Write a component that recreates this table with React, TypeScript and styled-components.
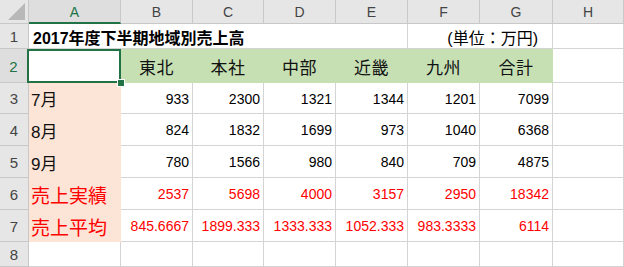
import React from 'react';
import styled, {createGlobalStyle, css} from 'styled-components';

const GRID = '#d4d4d4';
const HEAD_BG = '#e6e6e6';
const HEAD_LINE = '#c8c8c8';
const GREEN = '#217346';
const FILL_GREEN = '#c6e0b4';
const FILL_PEACH = '#fce4d6';
const RED = '#ff0000';

const columns = ['A', 'B', 'C', 'D', 'E', 'F', 'G', 'H'];
const regions = ['東北', '本社', '中部', '近畿', '九州', '合計'];

type Row = {label: string; values: string[]; red?: boolean};

const rows: Row[] = [
    {label: '7月', values: ['933', '2300', '1321', '1344', '1201', '7099']},
    {label: '8月', values: ['824', '1832', '1699', '973', '1040', '6368']},
    {label: '9月', values: ['780', '1566', '980', '840', '709', '4875']},
    {label: '売上実績', values: ['2537', '5698', '4000', '3157', '2950', '18342'], red: true},
    {label: '売上平均', values: ['845.6667', '1899.333', '1333.333', '1052.333', '983.3333', '6114'], red: true},
];

const GlobalStyle = createGlobalStyle`
    html, body {
        margin: 0;
        padding: 0;
        background: #fff;
    }
    body {
        font-family: "Liberation Sans", "Noto Sans CJK JP", sans-serif;
    }
    * {
        box-sizing: border-box;
    }
`;

const Sheet = styled.div`
    display: grid;
    grid-template-columns: 29px 92px 72px 71px 72px 72px 72px 73px 1fr;
    grid-template-rows: 24px 25px 34px 31px 32px 32px 32px 32px 1fr;
    width: 624px;
    height: 267px;
    overflow: hidden;
`;

const Corner = styled.div`
    background: ${HEAD_BG};
    border-right: 1px solid ${HEAD_LINE};
    border-bottom: 1px solid ${HEAD_LINE};
    display: flex;
`;

const ColHead = styled.div<{$active?: boolean}>`
    background: ${p => (p.$active ? '#dedede' : HEAD_BG)};
    border-right: 1px solid ${HEAD_LINE};
    border-bottom: ${p => (p.$active ? `2px solid ${GREEN}` : `1px solid ${HEAD_LINE}`)};
    color: ${p => (p.$active ? GREEN : '#444')};
    display: flex;
    align-items: center;
    justify-content: center;
    font-size: 14px;
    padding-top: ${p => (p.$active ? '1px' : '0')};
`;

const RowHead = styled.div<{$active?: boolean}>`
    background: ${p => (p.$active ? '#dedede' : HEAD_BG)};
    border-right: ${p => (p.$active ? `2px solid ${GREEN}` : `1px solid ${HEAD_LINE}`)};
    border-bottom: 1px solid ${HEAD_LINE};
    color: ${p => (p.$active ? GREEN : '#444')};
    display: flex;
    align-items: center;
    justify-content: center;
    font-size: 15px;
    padding-top: 1px;
`;

const Cell = styled.div<{$fill?: string; $span?: number}>`
    background: ${p => p.$fill || '#fff'};
    border-right: 1px solid ${p => p.$fill || GRID};
    border-bottom: 1px solid ${p => p.$fill || GRID};
    display: flex;
    align-items: center;
    min-width: 0;
    white-space: nowrap;
    color: #000;
    ${p => p.$span && css`grid-column: span ${p.$span};`}
`;

const Title = styled(Cell)`
    font-weight: bold;
    font-size: 16px;
    padding-left: 4px;
    padding-top: 1px;
`;

const Unit = styled(Cell)`
    justify-content: flex-end;
    font-size: 16px;
    padding-right: 14px;
    padding-top: 1px;
`;

const Selected = styled(Cell)`
    position: relative;

    &::before {
        content: '';
        position: absolute;
        left: -2px;
        top: 0;
        right: -1px;
        bottom: -1px;
        border: 2px solid ${GREEN};
    }

    &::after {
        content: '';
        position: absolute;
        right: -4px;
        bottom: -4px;
        width: 6px;
        height: 6px;
        background: ${GREEN};
        outline: 1px solid #fff;
    }
`;

const RegionCell = styled(Cell)`
    justify-content: center;
    font-size: 17px;
    letter-spacing: 0.5px;
    color: #111;
    padding-top: 1px;
`;

const LabelCell = styled(Cell)<{$red?: boolean}>`
    font-size: ${p => (p.$red ? '19px' : '17px')};
    color: ${p => (p.$red ? RED : '#111')};
    padding-left: 2px;
    padding-top: 1px;
`;

const NumCell = styled(Cell)<{$red?: boolean}>`
    justify-content: flex-end;
    font-size: 14px;
    color: ${p => (p.$red ? RED : '#000')};
    padding-right: 3px;
    padding-top: 1px;
`;

const CornerMark = () => (
    <svg width="28" height="23" viewBox="0 0 28 23">
        <polygon points="8,20 25,20 25,3" fill="#b8b8b8" />
    </svg>
);

export default function App() {
    return (
        <>
            <GlobalStyle />
            <Sheet>
                <Corner>
                    <CornerMark />
                </Corner>
                {columns.map(c => (
                    <ColHead key={c} $active={c === 'A'}>{c}</ColHead>
                ))}

                <RowHead>1</RowHead>
                <Title $span={5}>2017年度下半期地域別売上高</Title>
                <Unit $span={2}>(単位：万円)</Unit>
                <Cell />

                <RowHead $active>2</RowHead>
                <Selected />
                {regions.map(r => (
                    <RegionCell key={r} $fill={FILL_GREEN}>{r}</RegionCell>
                ))}
                <Cell />

                {rows.map((row, i) => (
                    <React.Fragment key={row.label}>
                        <RowHead>{i + 3}</RowHead>
                        <LabelCell $fill={FILL_PEACH} $red={row.red}>{row.label}</LabelCell>
                        {row.values.map((v, j) => (
                            <NumCell key={j} $red={row.red}>{v}</NumCell>
                        ))}
                        <Cell />
                    </React.Fragment>
                ))}

                <RowHead>8</RowHead>
                {columns.map(c => (
                    <Cell key={c} />
                ))}
            </Sheet>
        </>
    );
}
